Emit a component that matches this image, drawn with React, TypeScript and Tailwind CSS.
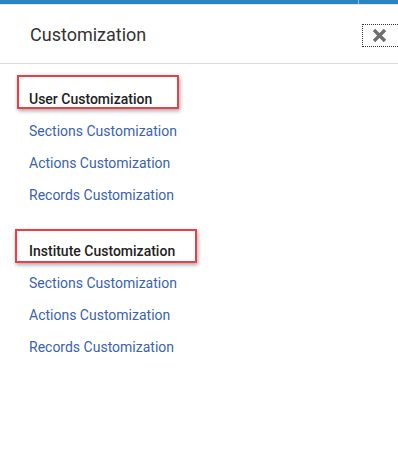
import React from "react";

const sections = [
  {
    title: "User Customization",
    box: "left-[-12px] top-[-8px] w-[162px] h-[34px]",
    links: ["Sections Customization", "Actions Customization", "Records Customization"],
  },
  {
    title: "Institute Customization",
    box: "left-[-14px] top-[-6px] w-[182px] h-[34px]",
    links: ["Sections Customization", "Actions Customization", "Records Customization"],
  },
];

const App: React.FC = () => {
  return (
    <div className="w-[398px] h-[476px] bg-white overflow-hidden font-['Roboto',sans-serif]">
      {/* top bar */}
      <div className="h-[4px] bg-[#2a84c2] flex justify-end">
        <div className="w-px bg-[#8fbde0] mr-[39px]" />
      </div>
      <div className="h-px bg-[#e6e6e6]" />

      {/* header */}
      <div className="h-[59px] border-b border-[#d9d9d9] flex items-center justify-between pl-[30px]">
        <h2 className="text-[18px] text-[#333] leading-none mt-[2px]">Customization</h2>
        <button className="w-[36px] h-[23px] mt-[3px] border border-dotted border-[#333] border-r-0 flex items-center pl-[9px]">
          <svg width="15" height="15" viewBox="0 0 15 15">
            <path d="M2 2 L13 13 M13 2 L2 13" stroke="#6f6f6f" strokeWidth="3.4" strokeLinecap="butt" />
          </svg>
        </button>
      </div>

      {/* content */}
      <div className="pl-[29px] pt-[19px] flex flex-col gap-[24px]">
        {sections.map((s) => (
          <div key={s.title} className="flex flex-col">
            <div className="relative h-[32px] flex items-center">
              <span className="text-[14px] font-medium text-[#222]">{s.title}</span>
              <div
                className={`absolute ${s.box} border-2 border-[#ee3d45] shadow-[1px_2px_4px_rgba(0,0,0,0.35)]`}
              />
            </div>
            {s.links.map((l) => (
              <a key={l} className="h-[32px] flex items-center text-[14px] text-[#3a63ad] cursor-pointer">
                {l}
              </a>
            ))}
          </div>
        ))}
      </div>
    </div>
  );
};

export default App;
